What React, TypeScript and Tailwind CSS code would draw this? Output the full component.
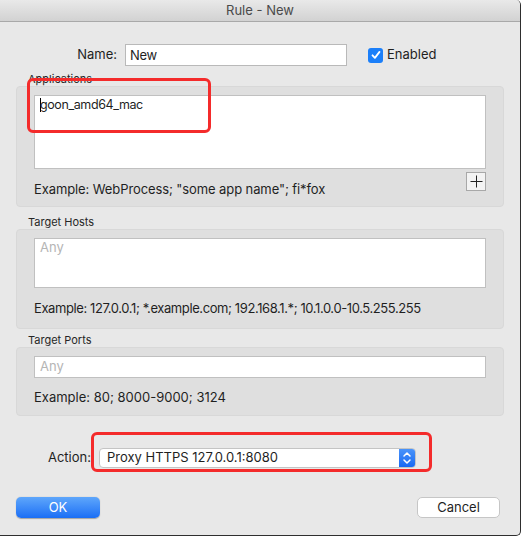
const font = { fontFamily: "Inter, 'Liberation Sans', sans-serif" };

// ── Small pieces ──────────────────────────────────────────────────────────────
function GroupLabel({ children }: { children: React.ReactNode }) {
  return <div className="ml-[28px] h-[14px] text-[11px] leading-[14px] text-[#262626]">{children}</div>;
}

function Box({ children, className = "" }: { children: React.ReactNode; className?: string }) {
  return (
    <div className={`mx-[16px] rounded-[4px] border border-[#d8d8d8] bg-[#dfdfdf] px-[17px] ${className}`}>
      {children}
    </div>
  );
}

const Check = () => (
  <svg viewBox="0 0 14 14" className="h-[14px] w-[14px]">
    <path d="M3.5 7.3l2.4 2.6 4.6-6" fill="none" stroke="white" strokeWidth={1.8} strokeLinecap="round" strokeLinejoin="round" />
  </svg>
);

const Stepper = () => (
  <svg viewBox="0 0 16 20" className="h-[20px] w-[16px]">
    <path d="M5 8l3-3 3 3M5 12l3 3 3-3" fill="none" stroke="white" strokeWidth={1.5} strokeLinecap="round" strokeLinejoin="round" />
  </svg>
);

const Plus = () => (
  <svg viewBox="0 0 13 13" className="h-[13px] w-[13px]">
    <path d="M6.5 0.5v12M0.5 6.5h12" fill="none" stroke="#222" strokeWidth={1} />
  </svg>
);

// ── Page ──────────────────────────────────────────────────────────────────────
export default function App() {
  return (
    <div className="h-[538px] w-[522px] bg-white" style={font}>
      <div className="relative h-[536px] w-[521px] overflow-hidden rounded-br-[5px] rounded-tr-[5px] border-b border-r border-[#2e2e2e] bg-[#e8e8e8] text-[13px] text-[#1f1f1f]">
        {/* Title bar */}
        <div className="flex h-[22px] items-center justify-center border-b border-[#a9a9a9] bg-gradient-to-b from-[#e9e9e9] to-[#d2d2d2] text-[13px] text-[#4a4a4a]">
          Rule - New
        </div>

        {/* Name row */}
        <div className="mt-[22px] flex h-[22px] items-center">
          <div className="w-[117px] text-right">Name:</div>
          <div className="ml-[8px] flex h-[22px] w-[222px] items-center border border-[#b9b9b9] bg-white px-[4px] pt-[2px] tracking-[-0.3px]">
            New
          </div>
          <div className="ml-[21px] flex h-[15px] w-[15px] items-center justify-center rounded-[3px] bg-[#1b7ff9]">
            <Check />
          </div>
          <div className="ml-[4px]">Enabled</div>
        </div>

        {/* Applications */}
        <div className="mt-[6px]">
          <GroupLabel>Applications</GroupLabel>
          <Box className="h-[121px] pt-[8px]">
            <div className="flex h-[74px] border border-[#c0c0c0] bg-white px-[5px] pt-[1px]">
              <span className="mt-[1px] h-[14px] w-px bg-black" />
              <span className="-ml-px text-[12.5px] leading-[16px] tracking-[-0.4px]">goon_amd64_mac</span>
            </div>
            <div className="flex items-start justify-between">
              <div className="pt-[12px] leading-[16px] tracking-[-0.1px]">Example: WebProcess; "some app name"; fi*fox</div>
              <div className="mt-[3px] flex h-[19px] w-[20px] items-center justify-center border border-[#a8a8a8] bg-[#f3f3f3]">
                <Plus />
              </div>
            </div>
          </Box>
        </div>

        {/* Target Hosts */}
        <div className="mt-[8px]">
          <GroupLabel>Target Hosts</GroupLabel>
          <Box className="h-[100px] pt-[8px]">
            <div className="h-[50px] border border-[#c0c0c0] bg-white px-[5px] leading-[16px] text-[#b5b5b5]">Any</div>
            <div className="pt-[12px] leading-[16px] tracking-[-0.4px]">Example: 127.0.0.1; *.example.com; 192.168.1.*; 10.1.0.0-10.5.255.255</div>
          </Box>
        </div>

        {/* Target Ports */}
        <div className="mt-[4px]">
          <GroupLabel>Target Ports</GroupLabel>
          <Box className="h-[69px] pt-[8px]">
            <div className="flex h-[22px] items-center border border-[#c0c0c0] bg-white px-[5px] text-[#b5b5b5]">Any</div>
            <div className="pt-[11px] leading-[16px]">Example: 80; 8000-9000; 3124</div>
          </Box>
        </div>

        {/* Action */}
        <div className="mt-[32px] flex h-[20px] items-center">
          <div className="w-[91px] text-right">Action:</div>
          <div className="ml-[8px] flex h-[20px] w-[317px] items-center overflow-hidden rounded-[4px] border border-[#c4c4c4] bg-white">
            <span className="flex-1 pl-[7px]">Proxy HTTPS 127.0.0.1:8080</span>
            <span className="flex h-[20px] w-[16px] items-center justify-center bg-gradient-to-b from-[#4c95fa] to-[#1466f2]">
              <Stepper />
            </span>
          </div>
        </div>

        {/* Buttons */}
        <div className="mt-[29px] flex justify-between pl-[16px] pr-[20px]">
          <div className="flex h-[21px] w-[84px] items-center justify-center rounded-[5px] bg-gradient-to-b from-[#5ea6fb] to-[#1a6ef5] text-white shadow-[0_0.5px_1px_rgba(0,0,0,0.3)]">
            OK
          </div>
          <div className="flex h-[21px] w-[83px] items-center justify-center rounded-[5px] border border-[#c6c6c6] bg-white">
            Cancel
          </div>
        </div>

        {/* Annotation boxes */}
        <div className="absolute left-[27px] top-[78px] h-[55px] w-[184px] rounded-[6px] border-[3px] border-[#f42b2b]" />
        <div className="absolute left-[91px] top-[432px] h-[40px] w-[341px] rounded-[6px] border-[3px] border-[#f42b2b]" />
      </div>
    </div>
  );
}
